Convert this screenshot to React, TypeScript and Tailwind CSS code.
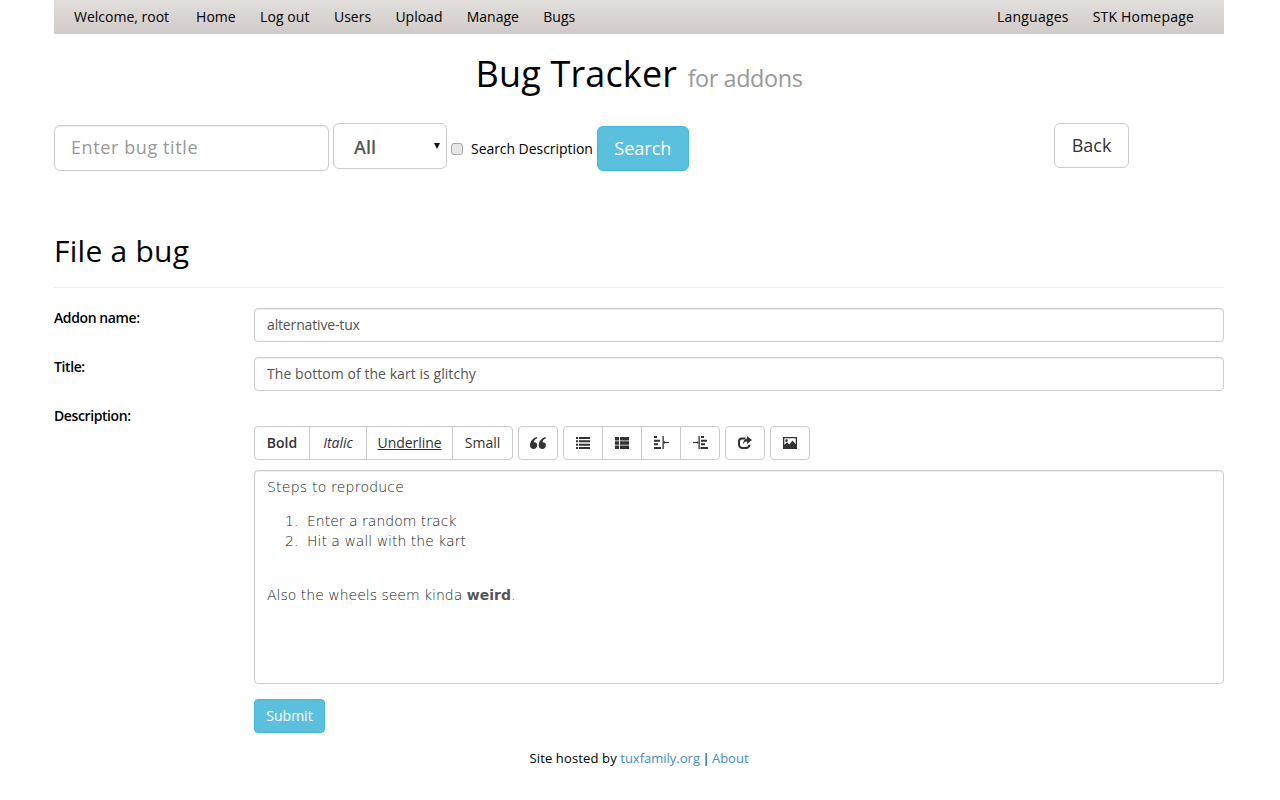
function ToolBtn({ children, className = "" }: { children: React.ReactNode; className?: string }) {
  return (
    <button className={`h-[34px] pb-[1px] flex items-center justify-center border border-[#ccc] bg-white text-[14px] text-[#333] ${className}`}>
      {children}
    </button>
  );
}

function Field({ label, value, className = "" }: { label: string; value: string; className?: string }) {
  return (
    <div className="flex mb-[15px]">
      <label className="w-[200px] text-[14px] leading-[20px] font-semibold tracking-[-0.4px] text-black">{label}</label>
      <input
        readOnly
        value={value}
        className={`flex-1 h-[34px] px-[12px] pb-[1px] border border-[#ccc] rounded-[4px] text-[14px] text-[#555] bg-white shadow-[inset_0_1px_1px_rgba(0,0,0,0.075)] outline-none ${className}`}
      />
    </div>
  );
}

export default function App() {
  return (
    <div className="w-[1170px] ml-[54px] min-h-[800px] bg-white text-black font-['Open_Sans',sans-serif]">
      <nav className="h-[34px] pb-[2px] flex items-center justify-between pl-[20px] pr-[30px] text-[14px] bg-gradient-to-b from-[#e2dedc] to-[#d0cbc8]">
        <div className="flex items-center">
          <span className="mr-[27px]">Welcome, root</span>
          <div className="flex gap-[24.3px]">
            <a>Home</a>
            <a className="tracking-[0.1px]">Log out</a>
            <a>Users</a>
            <a>Upload</a>
            <a>Manage</a>
            <a>Bugs</a>
          </div>
        </div>
        <div className="flex gap-[24px] tracking-[0.2px]">
          <a>Languages</a>
          <a>STK Homepage</a>
        </div>
      </nav>

      <h1 className="mt-[15px] h-[49px] text-center text-[36px] leading-[50px] tracking-[0.15px] text-black">
        Bug Tracker <small className="ml-[1px] text-[23.4px] tracking-[-0.4px] text-[#999]">for addons</small>
      </h1>

      <div className="mt-[25px] flex items-start">
        <input
          placeholder="Enter bug title"
          className="mt-[2px] w-[275px] h-[46px] px-[16px] pb-[2px] border border-[#ccc] rounded-[6px] text-[18px] tracking-[0.6px] bg-white outline-none placeholder:text-[#999] shadow-[inset_0_1px_1px_rgba(0,0,0,0.075)]"
        />
        <div className="relative ml-[4px] w-[114px] h-[46px]">
          <select className="appearance-none w-full h-full pl-[20px] pt-[2px] border border-[#ccc] rounded-[6px] text-[18px] font-semibold text-[#555] bg-white outline-none">
            <option>All</option>
          </select>
          <svg className="absolute left-[101px] top-[20px]" width="6" height="6" viewBox="0 0 6 6" fill="#111">
            <path d="M0 0h6L3 6z" />
          </svg>
        </div>
        <input
          type="checkbox"
          className="appearance-none ml-[4px] mt-[20px] w-[12px] h-[12px] rounded-[3px] border border-[#a9a9a9] bg-[#e6e6e6]"
        />
        <label className="ml-[8px] mt-[16px] text-[14px] leading-[20px] tracking-[-0.05px]">Search Description</label>
        <button className="ml-[4px] mt-[3px] w-[92px] h-[45px] rounded-[6px] border border-[#46b8da] bg-[#5bc0de] text-white text-[18px]">
          Search
        </button>
        <button className="ml-auto mr-[95px] w-[75px] h-[45px] rounded-[6px] border border-[#ccc] bg-white text-[#333] text-[18px]">
          Back
        </button>
      </div>

      <div className="mt-[59px] pb-[16px] border-b border-[#eee] mb-[20px]">
        <h2 className="text-[30px] leading-[41px] tracking-[0.25px] text-black">File a bug</h2>
      </div>

      <Field label="Addon name:" value="alternative-tux" className="tracking-[-0.15px]" />
      <Field label="Title:" value="The bottom of the kart is glitchy" className="tracking-[0.06px]" />

      <div className="flex">
        <label className="w-[200px] text-[14px] leading-[20px] font-semibold tracking-[-0.4px] text-black">Description:</label>
        <div className="flex-1 pt-[20px]">
          <div className="flex gap-[5px]">
            <div className="flex">
              <ToolBtn className="w-[56px] rounded-l-[4px] font-semibold">Bold</ToolBtn>
              <ToolBtn className="w-[58px] -ml-px italic">Italic</ToolBtn>
              <ToolBtn className="w-[87px] -ml-px underline tracking-[-0.05px]">Underline</ToolBtn>
              <ToolBtn className="w-[61px] -ml-px rounded-r-[4px]">Small</ToolBtn>
            </div>
            <ToolBtn className="w-[40px] rounded-[4px]">
              <svg width="16" height="12" viewBox="0 0 16 12" fill="#333">
                <path d="M0 8.600C0 4.400 2.600 1.300 6.800 0l.5 1.200C5 2.200 3.900 3.600 3.800 5.200c2-.2 3.400 1.100 3.400 3.100S5.800 12 3.700 12 0 10.800 0 8.600z" />
                <path d="M8.700 8.600c0-4.200 2.600-7.300 6.800-8.600l.5 1.200c-2.300 1-3.400 2.400-3.500 4 2-.2 3.400 1.100 3.400 3.100S14.500 12 12.400 12s-3.700-1.200-3.700-3.400z" />
              </svg>
            </ToolBtn>
            <div className="flex">
              <ToolBtn className="w-[40px] rounded-l-[4px]">
                <svg width="14" height="12" viewBox="0 0 14 12" fill="#333">
                  <path d="M0 0h2v2H0zM3 0h11v2H3zM0 3.300h2v2H0zM3 3.300h11v2H3zM0 6.700h2v2H0zM3 6.700h11v2H3zM0 10h2v2H0zM3 10h11v2H3z" />
                </svg>
              </ToolBtn>
              <ToolBtn className="w-[40px] -ml-px">
                <svg width="14" height="12" viewBox="0 0 14 12" fill="#333">
                  <path d="M0 0h4v3.400H0zM5 0h9v3.400H5zM0 4.300h4v3.400H0zM5 4.300h9v3.400H5zM0 8.600h4V12H0zM5 8.600h9V12H5z" />
                </svg>
              </ToolBtn>
              <ToolBtn className="w-[40px] -ml-px">
                <svg width="15" height="13" viewBox="0 0 15 13" fill="#333">
                  <path d="M0 0h3v2H0zM0 3.700h6v2H0zM0 7.300h4v2H0zM0 11h7v2H0zM8.500 0h1.300v13H8.500zM11 6h4v1h-4zM11 5l-1.500 1.500L11 8z" />
                </svg>
              </ToolBtn>
              <ToolBtn className="w-[40px] -ml-px rounded-r-[4px]">
                <svg width="15" height="13" viewBox="0 0 15 13" fill="#333">
                  <path d="M8 0h3v2H8zM8 3.700h6v2H8zM8 7.300h4v2H8zM7.500 11h7.500v2H7.500zM5.500 0h1.300v13H5.500zM0 6h4v1H0zM4 5l1.500 1.500L4 8z" />
                </svg>
              </ToolBtn>
            </div>
            <ToolBtn className="w-[40px] rounded-[4px]">
              <svg width="14" height="13" viewBox="0 0 14 13" fill="#333">
                <path d="M4 1.500h3.500v2H4.200A2.200 2.200 0 0 0 2 5.700v2.600a2.700 2.700 0 0 0 2.700 2.700h3.100a2.700 2.700 0 0 0 2.700-2.200h2A4.700 4.700 0 0 1 7.800 13H4.500A4.500 4.500 0 0 1 0 8.500V5.500a4 4 0 0 1 4-4z" />
                <path d="M9 0l5 4-5 4V5.600C7 5.600 5.500 6.600 5 8.800 4.800 5.500 6.500 3 9 2.500z" />
              </svg>
            </ToolBtn>
            <ToolBtn className="w-[40px] rounded-[4px]">
              <svg width="14" height="12" viewBox="0 0 14 12" fill="#333">
                <path fillRule="evenodd" d="M0 0h14v12H0zM1.300 1.300v6.700l2.700-2.700 2.300 2.200 3.200-4 3.200 3.800V1.300zM3.500 2.300a1.300 1.300 0 1 1 0 2.600 1.300 1.300 0 0 1 0-2.600z" />
              </svg>
            </ToolBtn>
          </div>

          <div className="mt-[10px] h-[214px] border border-[#ccc] rounded-[4px] px-[12px] pt-[6px] text-[14px] leading-[20px] text-[#222] font-['DejaVu_Sans',sans-serif] font-light shadow-[inset_0_1px_1px_rgba(0,0,0,0.075)]">
            <p className="tracking-[0.22px]">Steps to reproduce</p>
            <ol className="mt-[14px] mb-[34px] pl-[18px]">
              <li className="flex">
                <span className="w-[22px]">1.</span>
                <span>Enter a random track</span>
              </li>
              <li className="flex">
                <span className="w-[22px]">2.</span>
                <span>Hit a wall with the kart</span>
              </li>
            </ol>
            <p>
              Also the wheels seem kinda <b className="font-bold text-[#555]">weird</b>.
            </p>
          </div>

          <button className="mt-[15px] pb-[1px] block w-[71px] h-[34px] rounded-[4px] border border-[#46b8da] bg-[#5bc0de] text-white text-[14px]">
            Submit
          </button>
        </div>
      </div>

      <p className="mt-[15px] text-center text-[13px] leading-[20px] text-black">
        <span className="tracking-[0.14px]">Site hosted by</span> <a className="text-[#428bca]">tuxfamily.org</a>{" "}
        <span className="-mx-[1px]">|</span> <a className="text-[#428bca]">About</a>
      </p>
    </div>
  );
}
